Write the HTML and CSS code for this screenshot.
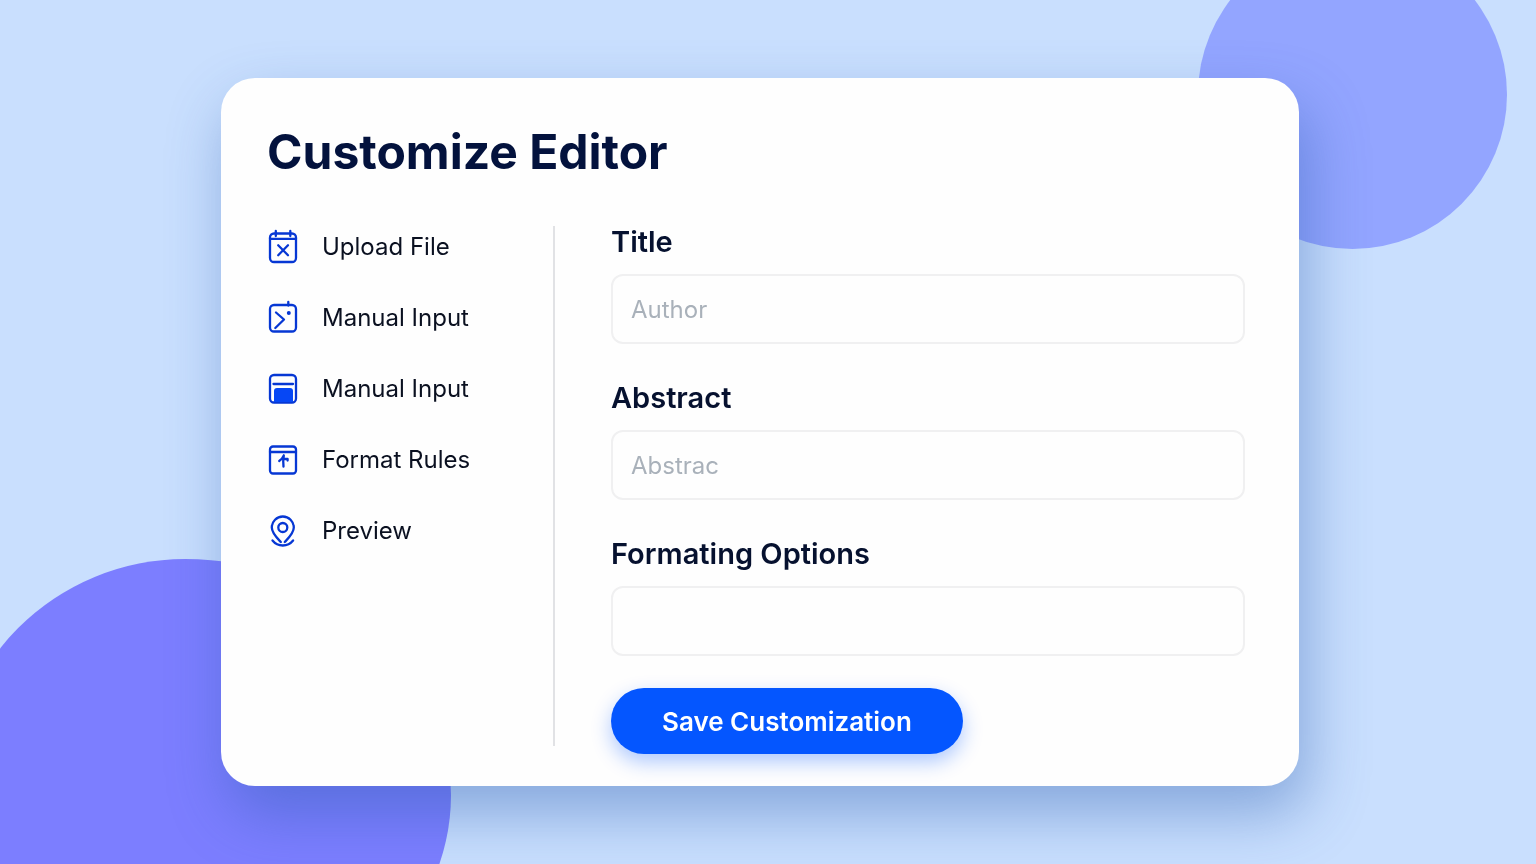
FILE: index.html
```html
<!DOCTYPE html>
<html lang="en">
<head>
<meta charset="utf-8">
<meta name="viewport" content="width=device-width, initial-scale=1">
<title>Customize Editor</title>
<link rel="stylesheet" href="styles.css">
</head>
<body>
<div class="backdrop" aria-hidden="true">
  <div class="blob blob-top"></div>
  <div class="blob blob-bottom"></div>
</div>
<main class="card">
  <h1 class="card-title">Customize Editor</h1>
  <div class="columns">
    <nav class="menu" aria-label="Editor steps">
      <a class="menu-item" href="#upload">
        <svg class="icon" viewBox="0 0 32 36"><rect x="3" y="4.500" width="26" height="28.500" rx="4"/><path d="M3 9.800h26M8.800 2v5M23.300 2v5M11.200 16.300l9.800 10M21 16.300l-9.800 10"/></svg>
        <span>Upload File</span>
      </a>
      <a class="menu-item" href="#manual">
        <svg class="icon" viewBox="0 0 32 36"><rect x="3" y="5" width="26" height="26.500" rx="4"/><path d="M21.300 2v3.500M9 12.500l8 7-8.700 8.500"/><circle class="dot" cx="21.800" cy="13" r="2"/></svg>
        <span>Manual Input</span>
      </a>
      <a class="menu-item" href="#manual-input">
        <svg class="icon" viewBox="0 0 32 36"><rect x="3" y="4" width="26" height="27.500" rx="4"/><path d="M6.500 13h19.500"/><path class="solid" d="M7 20q0-3 3-3h13q3 0 3 3v11H7z"/></svg>
        <span>Manual Input</span>
      </a>
      <a class="menu-item" href="#rules">
        <svg class="icon" viewBox="0 0 32 36"><rect x="3" y="4.500" width="26" height="27" rx="3"/><path d="M3 10h26M16.800 13.500q-1 5.500-.3 11M16.800 13.500q-1.300 3.500-4.600 5.500M17 16.800l3.600.2v1.500"/></svg>
        <span>Format Rules</span>
      </a>
      <a class="menu-item" href="#preview">
        <svg class="icon" viewBox="0 0 32 36"><path d="M13.800 29C9.500 24.500 4.800 20 4.800 14.500a11 11 0 0 1 22 0c0 5.500-4.700 10-9 14.500"/><circle cx="15.800" cy="14.500" r="4.500"/><path d="M5.500 27.500q4 5 10.300 5 6.300 0 10.300-5"/></svg>
        <span>Preview</span>
      </a>
    </nav>
    <form class="form" onsubmit="return false">
      <label class="label" for="title">Title</label>
      <input class="field" id="title" type="text" placeholder="Author">
      <label class="label" for="abstract">Abstract</label>
      <input class="field" id="abstract" type="text" placeholder="Abstrac">
      <label class="label" for="options">Formating Options</label>
      <input class="field" id="options" type="text">
      <button class="save" type="submit">Save Customization</button>
    </form>
  </div>
</main>
</body>
</html>
```
FILE: styles.css
```css
* {
  box-sizing: border-box;
}

body {
  margin: 0;
  min-height: 100vh;
  padding: 78px 237px 79px 221px;
  background: #c9dffe;
  color: #06112f;
  font-family: Inter, "Liberation Sans", sans-serif;
}

.backdrop {
  position: fixed;
  inset: 0;
  overflow: hidden;
}

.blob {
  position: absolute;
}

.blob-top {
  top: -60px;
  right: 29px;
  width: 309px;
  height: 309px;
  border-radius: 50%;
  background: #93a5ff;
}

.blob-bottom {
  left: -51px;
  bottom: -167px;
  width: 502px;
  height: 472px;
  border-radius: 236px 266px 266px 236px / 236px;
  background: #7c7eff;
}

.card {
  position: relative;
  padding: 44px 54px 32px 46px;
  border-radius: 34px;
  background: #fefefe;
  box-shadow: 8px 28px 60px rgba(40, 90, 175, 0.42);
}

.card-title {
  margin: 0 0 44px;
  color: #03123d;
  font-size: 48px;
  font-weight: 700;
  line-height: 60px;
}

.columns {
  display: flex;
}

.menu {
  display: flex;
  flex-direction: column;
  gap: 35px;
  width: 288px;
  height: 520px;
  padding-top: 3px;
  border-right: 2px solid #e1e2e5;
}

.menu-item {
  display: flex;
  align-items: center;
  gap: 23px;
  color: #0a1020;
  font-size: 24px;
  line-height: 36px;
  text-decoration: none;
}

.icon {
  flex: none;
  width: 32px;
  height: 36px;
  fill: none;
  stroke: #0637d4;
  stroke-width: 2.3;
  stroke-linecap: round;
  stroke-linejoin: round;
}

.icon .solid {
  fill: #0647f5;
  stroke: none;
}

.icon .dot {
  fill: #0637d4;
  stroke: none;
}

.form {
  display: flex;
  flex: 1;
  flex-direction: column;
  align-items: flex-start;
  margin-left: 56px;
}

.label {
  margin-bottom: 16px;
  font-size: 29px;
  font-weight: 600;
  line-height: 32px;
}

.field {
  width: 100%;
  height: 70px;
  margin-bottom: 38px;
  padding: 0 18px;
  border: 2px solid #f0f0f1;
  border-radius: 12px;
  background: #fefefe;
  color: inherit;
  font: inherit;
  font-size: 24px;
}

.field:last-of-type {
  margin-bottom: 32px;
}

.field::placeholder {
  color: #a9b1ba;
  opacity: 1;
}

.save {
  height: 66px;
  padding: 0 51px;
  border: 0;
  border-radius: 33px;
  background: #0456ff;
  box-shadow: 0 8px 20px rgba(4, 86, 255, 0.32);
  color: #fff;
  font: inherit;
  font-size: 26px;
  font-weight: 600;
}
```
